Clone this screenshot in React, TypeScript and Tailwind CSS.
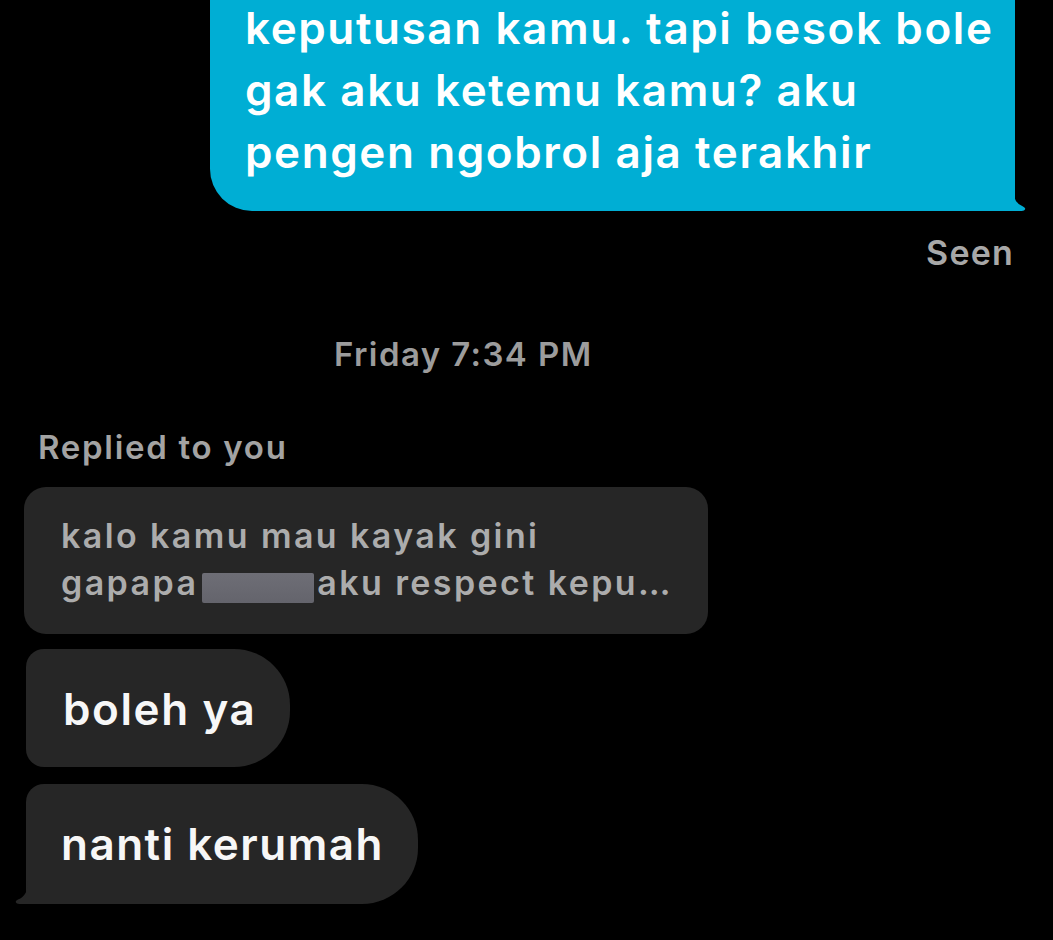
import React from "react";

const font = { fontFamily: "Inter, 'Noto Sans', sans-serif" };

// little curled tail under the last bubble of a group
function Tail({ side, color }: { side: "left" | "right"; color: string }) {
  const path =
    side === "right"
      ? "M0 0 Q0 15 10 18.5 Q14 20.5 11 22.5 Q9 23 6 23 L0 23 Z"
      : "M14 0 Q14 15 4 18.5 Q0 20.5 3 22.5 Q5 23 8 23 L14 23 Z";
  return (
    <svg
      width="14"
      height="23"
      viewBox="0 0 14 23"
      className={
        side === "right"
          ? "absolute bottom-0 right-[-12px]"
          : "absolute bottom-0 left-[-12px]"
      }
    >
      <path d={path} fill={color} />
    </svg>
  );
}

export default function App() {
  return (
    <div
      className="w-full h-[940px] bg-black overflow-hidden flex flex-col"
      style={font}
    >
      {/* my last message, cut off at the top */}
      <div className="flex justify-end pr-[38px]">
        <div className="relative w-[805px] mt-[-40px] pt-[37px] pb-[28px] pl-[35px] pr-[10px] bg-[#00aed4] rounded-tl-[40px] rounded-bl-[42px] rounded-tr-[40px] text-[44px] leading-[62px] font-semibold text-white tracking-[1.6px] whitespace-nowrap">
          <p>keputusan kamu. tapi besok bole</p>
          <p>gak aku ketemu kamu? aku</p>
          <p>pengen ngobrol aja terakhir</p>
          <Tail side="right" color="#00aed4" />
        </div>
      </div>

      <div className="flex justify-end pr-[39px] mt-[22px]">
        <span className="text-[34px] leading-[40px] font-semibold text-[#a8a8a8] tracking-[1.2px]">
          Seen
        </span>
      </div>

      <div className="ml-[334px] mt-[61px] text-[33px] leading-[40px] font-semibold text-[#9c9c9c] tracking-[1.4px]">
        Friday 7:34 PM
      </div>

      <div className="ml-[38px] mt-[53px] text-[33px] leading-[40px] font-semibold text-[#a3a3a3] tracking-[1.7px]">
        Replied to you
      </div>

      {/* quoted message */}
      <div className="ml-[24px] mt-[20px] w-[684px] rounded-[22px] bg-[#262626] pl-[37px] pr-[10px] pt-[25px] pb-[28px] text-[34px] leading-[47px] font-semibold text-[#acacac] tracking-[2.4px]">
        <p>kalo kamu mau kayak gini</p>
        <p className="whitespace-nowrap">
          gapapa
          <span className="inline-block align-[-8px] ml-[4px] mr-[3px] w-[112px] h-[30px] rounded-[2px] bg-gradient-to-b from-[#6e6e76] to-[#64646c]" />
          aku respect kepu…
        </p>
      </div>

      <div className="ml-[26px] mt-[15px] flex">
        <div className="rounded-l-[18px] rounded-r-[56px] bg-[#262626] pl-[37px] pr-[34px] pt-[33px] pb-[31px] text-[44px] leading-[54px] font-semibold text-[#f7f7f7] tracking-[1.6px]">
          boleh ya
        </div>
      </div>

      <div className="ml-[26px] mt-[17px] flex">
        <div className="relative rounded-tl-[18px] rounded-r-[56px] bg-[#262626] pl-[35px] pr-[34px] pt-[33px] pb-[33px] text-[44px] leading-[54px] font-semibold text-[#f7f7f7] tracking-[1.5px]">
          nanti kerumah
          <Tail side="left" color="#262626" />
        </div>
      </div>
    </div>
  );
}
